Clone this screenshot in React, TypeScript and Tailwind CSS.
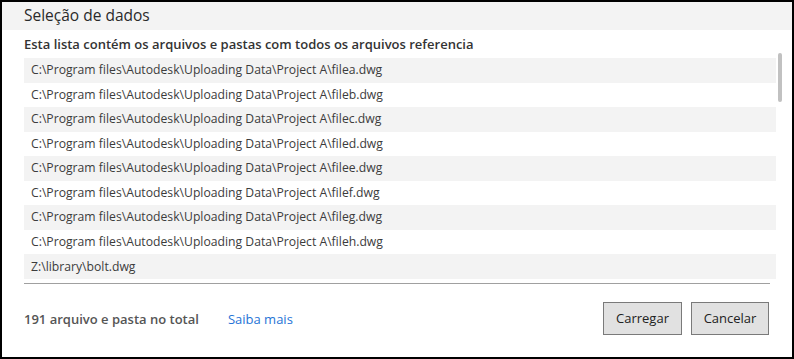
const files = [
  'C:\\Program files\\Autodesk\\Uploading Data\\Project A\\filea.dwg',
  'C:\\Program files\\Autodesk\\Uploading Data\\Project A\\fileb.dwg',
  'C:\\Program files\\Autodesk\\Uploading Data\\Project A\\filec.dwg',
  'C:\\Program files\\Autodesk\\Uploading Data\\Project A\\filed.dwg',
  'C:\\Program files\\Autodesk\\Uploading Data\\Project A\\filee.dwg',
  'C:\\Program files\\Autodesk\\Uploading Data\\Project A\\filef.dwg',
  'C:\\Program files\\Autodesk\\Uploading Data\\Project A\\fileg.dwg',
  'C:\\Program files\\Autodesk\\Uploading Data\\Project A\\fileh.dwg',
  'Z:\\library\\bolt.dwg',
]

export default function App() {
  return (
    <div
      className="flex h-[359px] w-[794px] flex-col border-2 border-black bg-white"
      style={{ fontFamily: '"Open Sans", "Noto Sans", sans-serif' }}
    >
      {/* Header */}
      <div className="flex h-[28px] shrink-0 items-center bg-[#f3f3f3] pl-[22px]">
        <h1 className="text-[15.5px] leading-none text-[#2a2a2a]">Seleção de dados</h1>
      </div>

      <div className="flex flex-1 flex-col px-[22px]">
        <div className="flex h-[23px] items-center pt-[5px]">
          <p className="text-[13px] font-semibold leading-none text-[#333]">
            Esta lista contém os arquivos e pastas com todos os arquivos referencia
          </p>
        </div>

        {/* File list */}
        <div className="flex h-[226px] w-[760px] shrink-0">
          <div className="w-[752px] shrink-0 pt-[5px]">
            {files.map((f, i) => (
              <div
                key={f}
                className={`flex h-[24.55px] items-center pl-[7px] text-[12.2px] text-[#3c3c3c] ${
                  i % 2 === 0 ? 'bg-[#f3f3f3]' : 'bg-white'
                }`}
              >
                {f}
              </div>
            ))}
          </div>
          <div className="ml-[2px] w-[5px] shrink-0">
            <div className="h-[49px] w-[4px] rounded-full bg-[#c1c1c1]"></div>
          </div>
        </div>

        <div className="mt-[4px] h-px w-[746px] bg-[#a0a0a0]"></div>

        {/* Footer */}
        <div className="mt-[18px] flex items-center">
          <span className="pt-[3px] text-[13px] font-semibold text-[#555]">191 arquivo e pasta no total</span>
          <a className="ml-[29px] pt-[3px] text-[13px] text-[#2673d6]" href="#">
            Saiba mais
          </a>
          <div className="ml-auto flex gap-[9px]">
            <button className="h-[33px] w-[79px] border border-[#7a7a7a] bg-[#e1e1e1] text-[13px] text-[#222]">
              Carregar
            </button>
            <button className="mr-px h-[33px] w-[78px] border border-[#7a7a7a] bg-[#e1e1e1] text-[13px] text-[#222]">
              Cancelar
            </button>
          </div>
        </div>
      </div>
    </div>
  )
}
